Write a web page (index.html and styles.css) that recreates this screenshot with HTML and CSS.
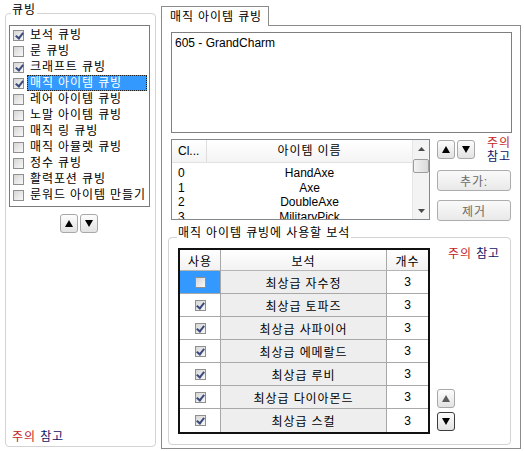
FILE: index.html
```html
<!DOCTYPE html>
<html lang="ko">
<head>
<meta charset="utf-8">
<title>큐빙</title>
<link rel="stylesheet" href="styles.css">
</head>
<body>
<div class="app">
  <div class="group cubing">
    <div class="group-title">큐빙</div>
    <div class="listbox">
      <div class="item"><span class="cb on"></span><span class="label">보석 큐빙</span></div>
      <div class="item"><span class="cb"></span><span class="label">룬 큐빙</span></div>
      <div class="item"><span class="cb on"></span><span class="label">크래프트 큐빙</span></div>
      <div class="item"><span class="cb on"></span><span class="label sel">매직 아이템 큐빙</span></div>
      <div class="item"><span class="cb"></span><span class="label">레어 아이템 큐빙</span></div>
      <div class="item"><span class="cb"></span><span class="label">노말 아이템 큐빙</span></div>
      <div class="item"><span class="cb"></span><span class="label">매직 링 큐빙</span></div>
      <div class="item"><span class="cb"></span><span class="label">매직 아뮬렛 큐빙</span></div>
      <div class="item"><span class="cb"></span><span class="label">정수 큐빙</span></div>
      <div class="item"><span class="cb"></span><span class="label">활력포션 큐빙</span></div>
      <div class="item"><span class="cb"></span><span class="label">룬워드 아이템 만들기</span></div>
    </div>
    <div class="spin">
      <button class="sbtn"><svg viewBox="0 0 8 7"><polygon points="4,0 8,7 0,7"/></svg></button>
      <button class="sbtn"><svg viewBox="0 0 8 7"><polygon points="0,0 8,0 4,7"/></svg></button>
    </div>
    <div class="note"><span class="warn">주의</span> <span class="ref">참고</span></div>
  </div>

  <div class="tabs">
    <div class="tab">매직 아이템 큐빙</div>
    <div class="panel">
      <div class="textbox">605 - GrandCharm</div>
      <div class="row2">
        <div class="listview">
          <div class="lv-main">
            <div class="lv-head"><div class="c1">Cl...</div><div class="c2">아이템 이름</div></div>
            <div class="lv-row"><div class="c1">0</div><div class="c2">HandAxe</div></div>
            <div class="lv-row"><div class="c1">1</div><div class="c2">Axe</div></div>
            <div class="lv-row"><div class="c1">2</div><div class="c2">DoubleAxe</div></div>
            <div class="lv-row"><div class="c1">3</div><div class="c2">MilitaryPick</div></div>
          </div>
          <div class="vscroll">
            <div class="sarrow"><svg viewBox="0 0 7 4"><polygon points="3.5,0 7,4 0,4"/></svg></div>
            <div class="thumb"></div>
            <div class="strack"></div>
            <div class="sarrow"><svg viewBox="0 0 7 4"><polygon points="0,0 7,0 3.5,4"/></svg></div>
          </div>
        </div>
        <div class="side">
          <div class="side-top">
            <button class="sbtn"><svg viewBox="0 0 8 7"><polygon points="4,0 8,7 0,7"/></svg></button>
            <button class="sbtn"><svg viewBox="0 0 8 7"><polygon points="0,0 8,0 4,7"/></svg></button>
            <div class="note-v"><span class="warn">주의</span><span class="ref">참고</span></div>
          </div>
          <button class="pbtn add">추가:</button>
          <button class="pbtn del">제거</button>
        </div>
      </div>

      <div class="group gems">
        <div class="group-title">매직 아이템 큐빙에 사용할 보석</div>
        <div class="gem-body">
          <div class="grid">
            <div class="h">사용</div><div class="h">보석</div><div class="h last">개수</div>

            <div class="cu selcell"><span class="cb"></span></div><div class="gn">최상급 자수정</div><div class="ct">3</div>
            <div class="cu"><span class="cb on"></span></div><div class="gn">최상급 토파즈</div><div class="ct">3</div>
            <div class="cu"><span class="cb on"></span></div><div class="gn">최상급 사파이어</div><div class="ct">3</div>
            <div class="cu"><span class="cb on"></span></div><div class="gn">최상급 에메랄드</div><div class="ct">3</div>
            <div class="cu"><span class="cb on"></span></div><div class="gn">최상급 루비</div><div class="ct">3</div>
            <div class="cu"><span class="cb on"></span></div><div class="gn">최상급 다이아몬드</div><div class="ct">3</div>
            <div class="cu end"><span class="cb on"></span></div><div class="gn end">최상급 스컬</div><div class="ct end">3</div>
          </div>
          <div class="gem-side">
            <div class="gem-note"><span class="warn">주의</span> <span class="ref">참고</span></div>
            <div class="gem-arrows">
              <button class="sbtn dis"><svg viewBox="0 0 8 7"><polygon points="4,0 8,7 0,7"/></svg></button>
              <button class="sbtn focus"><svg viewBox="0 0 8 7"><polygon points="0,0 8,0 4,7"/></svg></button>
            </div>
          </div>
        </div>
      </div>
    </div>
  </div>
</div>
</body>
</html>
```

FILE: styles.css
```css
* { box-sizing: border-box; }

body {
  margin: 0;
  background: #fff;
  font-family: "Liberation Sans", "Noto Sans CJK KR", sans-serif;
  font-size: 12px;
  letter-spacing: 0.9px;
  color: #000;
}

.app {
  display: flex;
  align-items: flex-start;
  width: 524px;
  height: 451px;
}

/* group boxes */
.group {
  border: 1px solid #d3d3d3;
  border-radius: 4px;
  display: flex;
  flex-direction: column;
}
.group-title {
  align-self: flex-start;
  background: #fff;
  line-height: 16px;
  padding: 0 1px;
  white-space: nowrap;
}

.cubing {
  margin: 13px 0 0 5px;
  width: 151px;
  height: 434px;
}
.cubing .group-title { margin: -12px 0 0 5px; }

.listbox {
  margin: 7px 0 0 3px;
  width: 141px;
  height: 182px;
  border: 1px solid #7b7b7b;
  padding-top: 1px;
}
.item {
  display: flex;
  align-items: center;
  height: 16px;
}
.cb {
  position: relative;
  flex: none;
  width: 11px;
  height: 11px;
  border: 1px solid #8f8f8f;
  background: linear-gradient(135deg, #d6d6d6, #f8f8f8);
}
.item .cb { margin-left: 3px; }
.cb.on::after {
  content: "";
  position: absolute;
  left: 2.5px;
  top: 0;
  width: 3px;
  height: 6px;
  border: solid #3b4a7c;
  border-width: 0 2px 2px 0;
  transform: rotate(38deg);
}
.label {
  flex: 1;
  margin: 0 2px 0 3px;
  padding-left: 3px;
  line-height: 16px;
  white-space: nowrap;
  overflow: hidden;
}
.label.sel {
  background: #3399ff;
  color: #fff;
  outline: 1px dotted #222;
  outline-offset: -1px;
}

.spin {
  display: flex;
  gap: 2px;
  margin-top: 7px;
  padding-left: 54px;
}
.sbtn {
  width: 18px;
  height: 19px;
  padding: 0;
  border: 1px solid #a8a8a8;
  border-radius: 3px;
  background: linear-gradient(#fdfdfd, #e2e2e2);
  display: flex;
  align-items: center;
  justify-content: center;
}
.sbtn svg { width: 8px; height: 7px; fill: #000; }
.sbtn.dis svg { fill: #5c5c5c; }
.sbtn.focus { border-color: #3c3c3c; }

.note {
  margin-top: auto;
  margin-bottom: 1px;
  padding-left: 6px;
  line-height: 16px;
}
.warn { color: #c4221e; }
.ref { color: #121266; }

/* tab control */
.tabs {
  margin: 6px 0 0 5px;
  width: 360px;
  display: flex;
  flex-direction: column;
}
.tab {
  position: relative;
  z-index: 1;
  align-self: flex-start;
  width: 108px;
  height: 20px;
  margin-bottom: -1px;
  padding-left: 8px;
  border: 1px solid #8c8c8c;
  border-bottom: none;
  background: #fff;
  line-height: 20px;
  white-space: nowrap;
}
.panel {
  height: 424px;
  border: 1px solid #8c8c8c;
  padding: 6px 8px 0 6px;
  display: flex;
  flex-direction: column;
}
.textbox {
  flex: none;
  height: 101px;
  margin-left: 3px;
  border: 1px solid #7f7f7f;
  padding: 3px 3px;
  line-height: 14px;
  letter-spacing: 0;
}

.row2 {
  display: flex;
  gap: 7px;
  margin: 6px 0 0 3px;
}
.listview {
  width: 259px;
  height: 81px;
  border: 1px solid #828790;
  display: flex;
  overflow: hidden;
}
.lv-main { flex: 1; overflow: hidden; }
.lv-head {
  display: flex;
  height: 23px;
  border-bottom: 1px solid #e2e2e2;
  background: linear-gradient(#ffffff, #f4f4f4);
  line-height: 23px;
  margin-bottom: 3px;
}
.lv-head .c1 { border-right: 1px solid #dedede; letter-spacing: 0; }
.c1 { width: 35px; padding-left: 6px; flex: none; white-space: nowrap; }
.c2 { flex: 1; text-align: center; white-space: nowrap; }
.lv-row { display: flex; height: 14.5px; line-height: 14px; letter-spacing: 0; }

.vscroll {
  width: 17px;
  flex: none;
  background: #f3f3f3;
  border-left: 1px solid #e6e6e6;
  display: flex;
  flex-direction: column;
}
.sarrow {
  height: 17px;
  display: flex;
  align-items: center;
  justify-content: center;
}
.sarrow svg { width: 7px; height: 4px; fill: #4a4a4a; }
.thumb {
  height: 14px;
  margin: 2px 0 0 0;
  border: 1px solid #9c9c9c;
  border-radius: 2px;
  background: linear-gradient(90deg, #f2f2f2, #dadada);
}
.strack { flex: 1; }

.side {
  width: 74px;
  display: flex;
  flex-direction: column;
}
.side-top {
  display: flex;
  gap: 2px;
  height: 19px;
  margin-top: 1px;
}
.note-v {
  display: flex;
  flex-direction: column;
  margin: -4px 0 0 10px;
  line-height: 14px;
}
.pbtn {
  height: 21px;
  padding: 0;
  border: 1px solid #adadad;
  border-radius: 3px;
  background: linear-gradient(#fafafa, #e9e9e9);
  color: #6b6b6b;
  font: inherit;
  letter-spacing: 0.9px;
}
.add { margin-top: 11px; }
.del { margin-top: 9px; }

/* gems group */
.gems {
  flex: 1;
  margin: 16px 1px 3px 0;
}
.gems .group-title { margin: -13px 0 0 8px; }
.gem-body {
  display: flex;
  margin: 7px 0 0 9px;
}
.grid {
  display: grid;
  grid-template-columns: 41px 166px 41px;
  width: 252px;
  border: 2px solid #111;
}
.grid > div {
  display: flex;
  align-items: center;
  justify-content: center;
  height: 23px;
  border-bottom: 1px solid #a8a8a8;
}
.grid > .h {
  height: 21px;
  background: linear-gradient(#ffffff, #f2f2f2);
  border-bottom-color: #b5b5b5;
}
.grid > .end { border-bottom: none; }
.grid > .cu, .grid > .h:not(.last), .grid > .gn { border-right: 1px solid #a8a8a8; }
.cu { background: #fff; }
.cu.selcell { background: #3399ff; }
.gn { background: #eeeeee; }
.ct { background: #fff; letter-spacing: 0; }

.gem-side {
  display: flex;
  flex-direction: column;
  padding-left: 7px;
}
.gem-note {
  margin: -1px 0 0 11px;
  line-height: 14px;
  white-space: nowrap;
}
.gem-arrows {
  margin-top: auto;
  margin-bottom: 3px;
  display: flex;
  flex-direction: column;
  gap: 4px;
}
```
